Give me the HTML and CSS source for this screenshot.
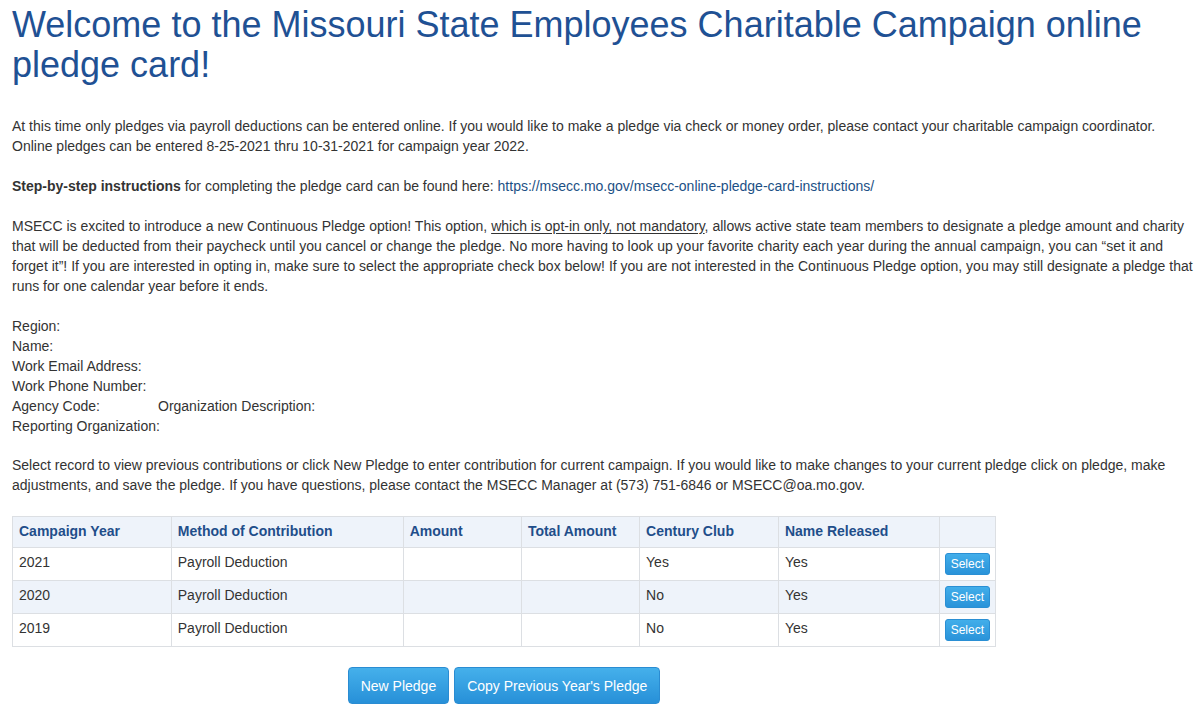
FILE: index.html
```html
<!DOCTYPE html>
<html lang="en">

<head>
    <meta charset="UTF-8">
    <meta name="viewport" content="width=device-width, initial-scale=1.0">
    <title>MSECC - Online Pledge Card</title>
    <link rel="stylesheet" href="styles.css">
</head>

<body>

    <div class="page">
        <h1>Welcome to the Missouri State Employees Charitable Campaign online pledge card!</h1>

        <p>At this time only pledges via payroll deductions can be entered online. If you would like to make a pledge via check or money order, please contact your charitable campaign coordinator. Online pledges can be entered 8-25-2021 thru 10-31-2021 for campaign year 2022.</p>

        <p><strong>Step-by-step instructions</strong> for completing the pledge card can be found here: <a href="#">https://msecc.mo.gov/msecc-online-pledge-card-instructions/</a></p>

        <p>MSECC is excited to introduce a new Continuous Pledge option! This option, <span class="underline">which is opt-in only, not mandatory</span>, allows active state team members to designate a pledge amount and charity that will be deducted from their paycheck until you cancel or change the pledge. No more having to look up your favorite charity each year during the annual campaign, you can &ldquo;set it and forget it&rdquo;! If you are interested in opting in, make sure to select the appropriate check box below! If you are not interested in the Continuous Pledge option, you may still designate a pledge that runs for one calendar year before it ends.</p>

        <div class="info">
            <div>Region:</div>
            <div>Name:</div>
            <div>Work Email Address:</div>
            <div>Work Phone Number:</div>
            <div><span class="label-fixed">Agency Code:</span>Organization Description:</div>
            <div>Reporting Organization:</div>
        </div>

        <p>Select record to view previous contributions or click New Pledge to enter contribution for current campaign. If you would like to make changes to your current pledge click on pledge, make adjustments, and save the pledge. If you have questions, please contact the MSECC Manager at (573) 751-6846 or MSECC@oa.mo.gov.</p>

        <div class="pledge-area">
            <table class="pledge-table">
                <thead>
                    <tr>
                        <th class="col-year">Campaign Year</th>
                        <th class="col-method">Method of Contribution</th>
                        <th class="col-amount">Amount</th>
                        <th class="col-total">Total Amount</th>
                        <th class="col-century">Century Club</th>
                        <th class="col-name">Name Released</th>
                        <th class="col-select"></th>
                    </tr>
                </thead>
                <tbody>
                    <tr>
                        <td>2021</td>
                        <td>Payroll Deduction</td>
                        <td></td>
                        <td></td>
                        <td>Yes</td>
                        <td>Yes</td>
                        <td class="select-cell"><button class="btn-select">Select</button></td>
                    </tr>
                    <tr>
                        <td>2020</td>
                        <td>Payroll Deduction</td>
                        <td></td>
                        <td></td>
                        <td>No</td>
                        <td>Yes</td>
                        <td class="select-cell"><button class="btn-select">Select</button></td>
                    </tr>
                    <tr>
                        <td>2019</td>
                        <td>Payroll Deduction</td>
                        <td></td>
                        <td></td>
                        <td>No</td>
                        <td>Yes</td>
                        <td class="select-cell"><button class="btn-select">Select</button></td>
                    </tr>
                </tbody>
            </table>

            <div class="actions">
                <button class="btn">New Pledge</button>
                <button class="btn">Copy Previous Year's Pledge</button>
            </div>
        </div>
    </div>

</body>
</html>
```

FILE: styles.css
```css
body {
    font-family: "Liberation Sans", Arial, sans-serif;
    font-size: 14px;
    line-height: 20px;
    color: #333;
    background-color: #fff;
    margin: 0;
    padding: 0;
}

.page {
    padding: 0 0 0 12px;
}

h1 {
    font-size: 36px;
    font-weight: normal;
    line-height: 40px;
    color: #1f5194;
    margin: 5px 0 31px;
    padding-right: 12px;
}

p {
    margin: 0 0 20px;
}

a {
    color: #1c5085;
    text-decoration: none;
}

.underline {
    text-decoration: underline;
    text-underline-offset: 2px;
}

.info {
    margin-bottom: 19px;
}

.label-fixed {
    display: inline-block;
    width: 146px;
}

.pledge-area {
    width: 984px;
    margin-top: 21px;
}

.pledge-table {
    width: 100%;
    border-collapse: collapse;
}

.pledge-table th,
.pledge-table td {
    border: 1px solid #dcdfe3;
    text-align: left;
    padding: 4px 6px 8px;
    vertical-align: top;
}

.pledge-table th {
    background-color: #eef3fa;
    color: #1f4e8a;
    font-weight: bold;
    padding: 4px 6px 6px;
}

.pledge-table td.select-cell {
    padding: 5px 5px;
}

.pledge-table tbody tr:nth-child(even) {
    background-color: #eef3fa;
}

.col-year { width: 147px; }
.col-method { width: 221px; }
.col-amount { width: 106px; }
.col-total { width: 106px; }
.col-century { width: 127px; }
.col-name { width: 149px; }

.btn-select {
    display: block;
    height: 22px;
    font-family: "Liberation Sans", Arial, sans-serif;
    font-size: 12px;
    line-height: 16px;
    color: #fff;
    background: linear-gradient(#42aeea, #2a93d9);
    border: 1px solid #2a8fd4;
    border-radius: 3px;
    padding: 2px 5px;
    cursor: pointer;
}

.actions {
    display: flex;
    justify-content: center;
    gap: 5px;
    margin-top: 20px;
}

.btn {
    font-family: "Liberation Sans", Arial, sans-serif;
    font-size: 14px;
    line-height: 20px;
    color: #fff;
    background: linear-gradient(#45b0eb, #2790d8);
    border: 1px solid #2a8cd2;
    border-radius: 4px;
    padding: 8px 12px 7px;
    cursor: pointer;
}
```
